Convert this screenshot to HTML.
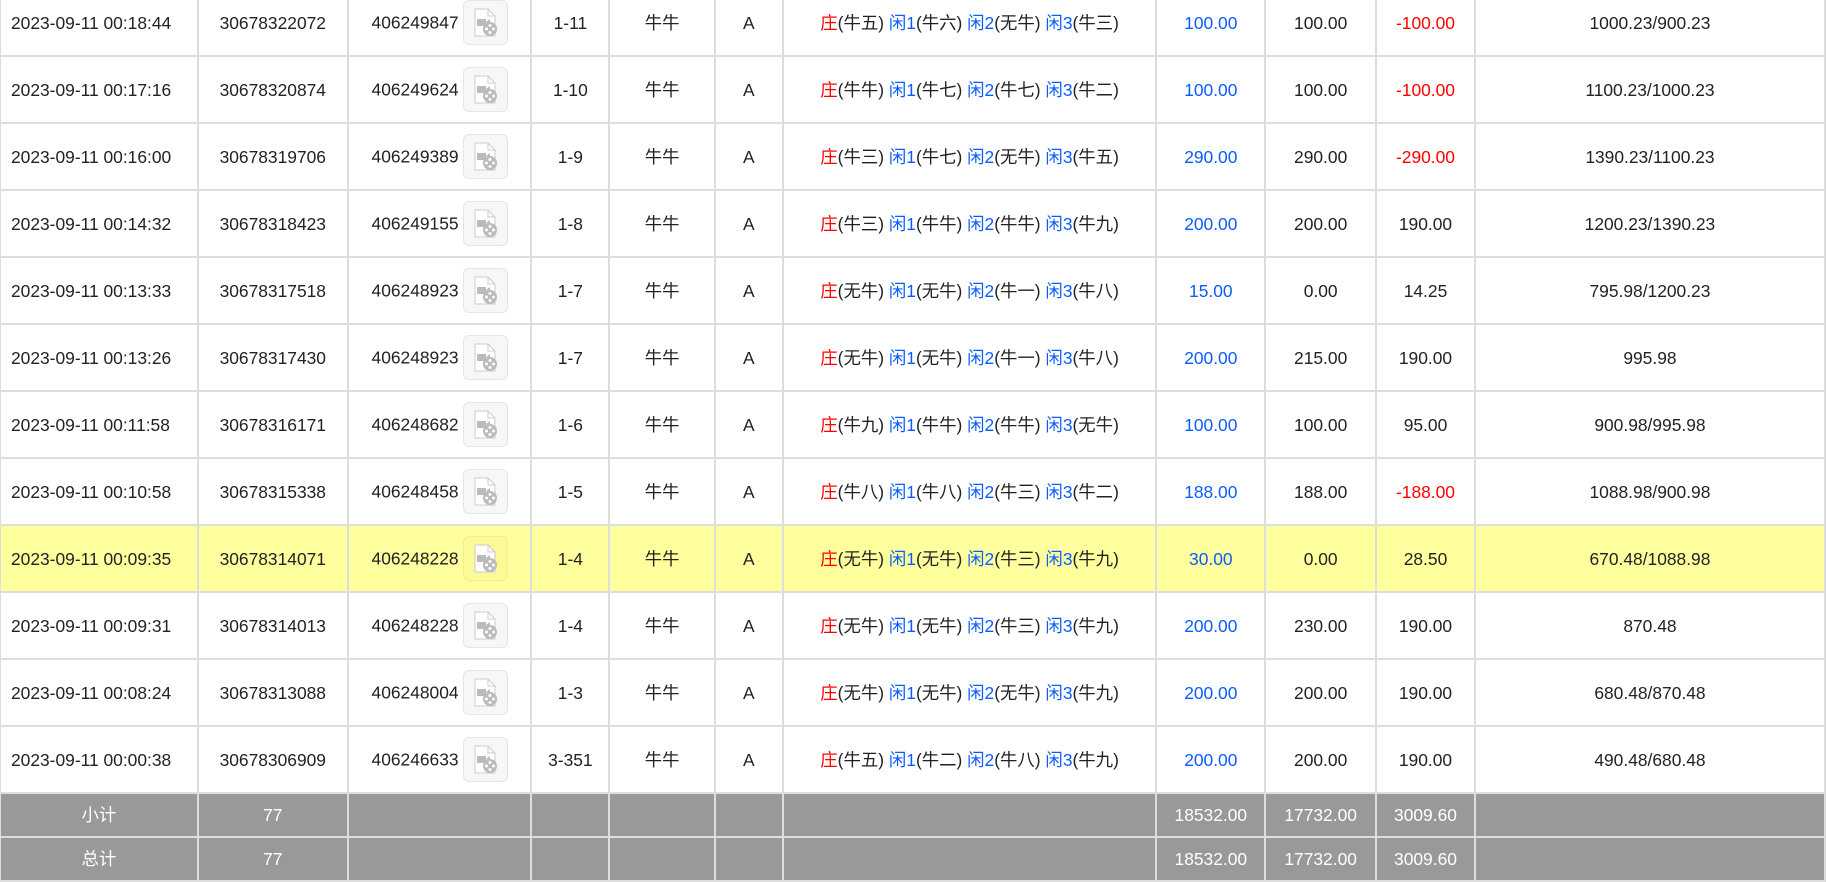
<!DOCTYPE html>
<html><head><meta charset="utf-8"><style>
html,body{margin:0;padding:0;width:1827px;height:874px;overflow:hidden;background:#fff;}
table{position:absolute;left:-1px;top:-12px;border-collapse:collapse;table-layout:fixed;font-family:"Liberation Sans","Noto Sans CJK SC",sans-serif;font-size:17.4px;color:#222;line-height:20px;}
td{border:2px solid #ddd;height:65px;text-align:center;padding:0;white-space:nowrap;vertical-align:middle;}
td.f{text-align:left;padding-left:10px;}
tr.hl td{background:#ffff9e;}
tr.sum td{background:#999;color:#fff;height:42px;border-color:#ddd;}
tr.sum td.f{text-align:center;padding-left:0}
.r{color:#f00}.b{color:#0a5cff}
.n{vertical-align:middle}
.ic{display:inline-block;width:43px;height:43px;border:1px solid #e6e6e6;border-radius:6px;background:#f7f7f7;vertical-align:middle;margin-left:4px;position:relative;}
.ic svg{position:absolute;left:6px;top:6px}
tr.hl .ic{background:#fafa96;border-color:#f0f08a;}
</style></head><body>
<table>
<colgroup><col style="width:198px"><col style="width:150px"><col style="width:184px"><col style="width:78px"><col style="width:106px"><col style="width:68px"><col style="width:374px"><col style="width:109px"><col style="width:111px"><col style="width:99px"><col style="width:351px"></colgroup>
<tbody id="tb"></tbody>
</table>
<script>
var d=[
["2023-09-11 00:18:44","30678322072","406249847","1-11","牛五","牛六","无牛","牛三","100.00","100.00","-100.00","1000.23/900.23"],
["2023-09-11 00:17:16","30678320874","406249624","1-10","牛牛","牛七","牛七","牛二","100.00","100.00","-100.00","1100.23/1000.23"],
["2023-09-11 00:16:00","30678319706","406249389","1-9","牛三","牛七","无牛","牛五","290.00","290.00","-290.00","1390.23/1100.23"],
["2023-09-11 00:14:32","30678318423","406249155","1-8","牛三","牛牛","牛牛","牛九","200.00","200.00","190.00","1200.23/1390.23"],
["2023-09-11 00:13:33","30678317518","406248923","1-7","无牛","无牛","牛一","牛八","15.00","0.00","14.25","795.98/1200.23"],
["2023-09-11 00:13:26","30678317430","406248923","1-7","无牛","无牛","牛一","牛八","200.00","215.00","190.00","995.98"],
["2023-09-11 00:11:58","30678316171","406248682","1-6","牛九","牛牛","牛牛","无牛","100.00","100.00","95.00","900.98/995.98"],
["2023-09-11 00:10:58","30678315338","406248458","1-5","牛八","牛八","牛三","牛二","188.00","188.00","-188.00","1088.98/900.98"],
["2023-09-11 00:09:35","30678314071","406248228","1-4","无牛","无牛","牛三","牛九","30.00","0.00","28.50","670.48/1088.98"],
["2023-09-11 00:09:31","30678314013","406248228","1-4","无牛","无牛","牛三","牛九","200.00","230.00","190.00","870.48"],
["2023-09-11 00:08:24","30678313088","406248004","1-3","无牛","无牛","无牛","牛九","200.00","200.00","190.00","680.48/870.48"],
["2023-09-11 00:00:38","30678306909","406246633","3-351","牛五","牛二","牛八","牛九","200.00","200.00","190.00","490.48/680.48"]];
var ic='<span class="ic"><svg width="31" height="31" viewBox="0 0 31 31"><path d="M5 2h13l7 7v20H5z" fill="#fff" stroke="#ccc"/><path d="M18 2v7h7" fill="none" stroke="#ccc"/><rect x="7" y="12" width="9" height="7" fill="#bbb"/><path d="M16 15l4-3v7z" fill="#bbb"/><circle cx="20" cy="22" r="7" fill="#bbb"/><circle cx="20" cy="18.5" r="1.5" fill="#fff"/><circle cx="20" cy="25.5" r="1.5" fill="#fff"/><circle cx="16.5" cy="22" r="1.5" fill="#fff"/><circle cx="23.5" cy="22" r="1.5" fill="#fff"/></svg></span>';
var h='';
d.forEach(function(r,i){
var c=r[10].charAt(0)=='-'?' class="r"':'';
h+='<tr'+(i==8?' class="hl"':'')+'><td class="f">'+r[0]+'</td><td>'+r[1]+'</td><td><span class="n">'+r[2]+'</span>'+ic+'</td><td>'+r[3]+'</td><td>牛牛</td><td>A</td><td><span class="r">庄</span>('+r[4]+') <span class="b">闲1</span>('+r[5]+') <span class="b">闲2</span>('+r[6]+') <span class="b">闲3</span>('+r[7]+')</td><td class="b">'+r[8]+'</td><td>'+r[9]+'</td><td'+c+'>'+r[10]+'</td><td>'+r[11]+'</td></tr>';
});
['小计','总计'].forEach(function(t){h+='<tr class="sum"><td class="f">'+t+'</td><td>77</td><td></td><td></td><td></td><td></td><td></td><td>18532.00</td><td>17732.00</td><td>3009.60</td><td></td></tr>';});
document.getElementById('tb').innerHTML=h;
</script>
</body></html>
